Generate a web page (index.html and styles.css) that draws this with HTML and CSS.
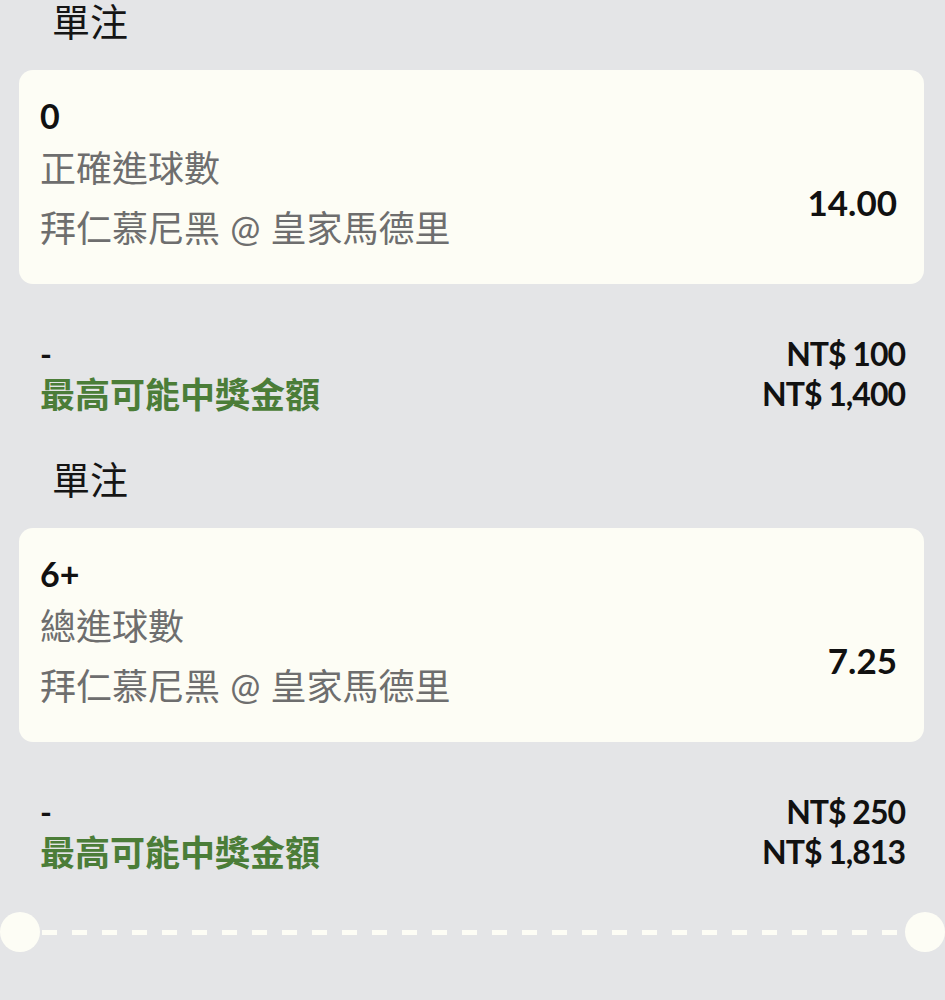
FILE: index.html
```html
<!DOCTYPE html>
<html lang="zh-Hant">
<head>
    <meta charset="UTF-8">
    <meta name="viewport" content="width=device-width, initial-scale=1.0">
    <title>投注單</title>
    <link rel="stylesheet" href="styles.css">
</head>
<body>
    <div class="slip">
        <div class="bet">
            <h2 class="bet-type">單注</h2>
            <div class="selection">
                <div class="selection-info">
                    <div class="pick">0</div>
                    <div class="market">正確進球數</div>
                    <div class="event">拜仁慕尼黑 @ 皇家馬德里</div>
                </div>
                <div class="odds">14.00</div>
            </div>
            <div class="summary">
                <div class="summary-left">
                    <div class="stake-label">-</div>
                    <div class="payout-label">最高可能中獎金額</div>
                </div>
                <div class="summary-right">
                    <div>NT$ 100</div>
                    <div>NT$ 1,400</div>
                </div>
            </div>
        </div>

        <div class="bet">
            <h2 class="bet-type">單注</h2>
            <div class="selection">
                <div class="selection-info">
                    <div class="pick">6+</div>
                    <div class="market">總進球數</div>
                    <div class="event">拜仁慕尼黑 @ 皇家馬德里</div>
                </div>
                <div class="odds">7.25</div>
            </div>
            <div class="summary">
                <div class="summary-left">
                    <div class="stake-label">-</div>
                    <div class="payout-label">最高可能中獎金額</div>
                </div>
                <div class="summary-right">
                    <div>NT$ 250</div>
                    <div>NT$ 1,813</div>
                </div>
            </div>
        </div>

        <div class="tear">
            <div class="notch"></div>
            <div class="dashes"></div>
            <div class="notch"></div>
        </div>
    </div>
</body>
</html>
```

FILE: styles.css
```css
body {
    margin: 0;
    background: #e4e5e7;
    font-family: Lato, "Noto Sans CJK TC", sans-serif;
    color: #111;
}

.slip {
    margin-top: -7px;
}

.bet + .bet {
    margin-top: 37px;
}

.bet-type {
    margin: 0 0 21px;
    padding-left: 52px;
    font-size: 38px;
    font-weight: normal;
    line-height: 56px;
    color: #151515;
}

.selection {
    display: flex;
    justify-content: space-between;
    margin: 0 21px 0 19px;
    padding: 24px 27px 26px 21px;
    background: #fdfdf5;
    border-radius: 14px;
}

.pick {
    font-size: 34px;
    font-weight: bold;
    line-height: 44px;
}

.market, .event {
    font-size: 36px;
    line-height: 60px;
    color: #6e6e6e;
}

.event {
    word-spacing: 1px;
}

.odds {
    margin-top: 86px;
    font-size: 35px;
    font-weight: bold;
    line-height: 44px;
}

.summary {
    display: flex;
    justify-content: space-between;
    margin: 50px 40px 0;
    font-size: 32px;
    font-weight: bold;
    line-height: 40px;
}

.summary-right {
    text-align: right;
    letter-spacing: -1px;
}

.payout-label {
    font-size: 35px;
    color: #4b7d38;
}

.tear {
    display: flex;
    align-items: center;
    margin-top: 40px;
}

.notch {
    width: 40px;
    height: 40px;
    border-radius: 50%;
    background: #fdfdf5;
}

.dashes {
    flex: 1;
    height: 5px;
    margin: 0 2px;
    background: repeating-linear-gradient(to right, #fdfdf5 0 15px, transparent 15px 30px);
}
```
